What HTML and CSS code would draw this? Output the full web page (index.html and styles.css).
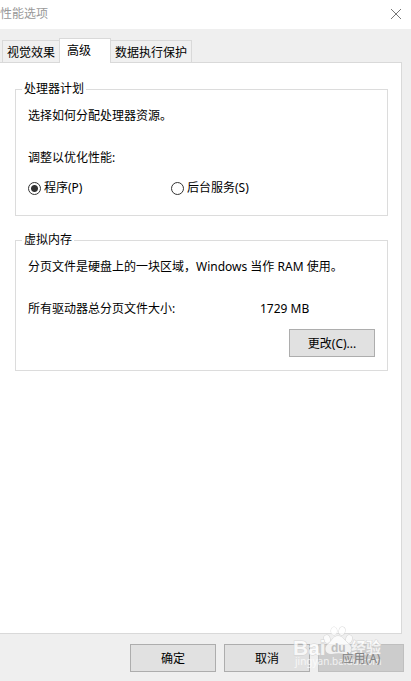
FILE: index.html
```
<!DOCTYPE html>
<html lang="zh-CN">
<head>
  <meta charset="UTF-8">
  <meta name="viewport" content="width=device-width, initial-scale=1.0">
  <title>性能选项</title>
  <link rel="stylesheet" href="styles.css">
</head>
<body>
  <header class="titlebar">
    <span>性能选项</span>
    <button class="close" type="button" aria-label="关闭">
      <svg width="12" height="12" viewBox="0 0 12 12"><path d="M1 1L11 11M11 1L1 11" stroke="#777" fill="none"/></svg>
    </button>
  </header>

  <nav class="tabs">
    <button class="tab" type="button">视觉效果</button>
    <button class="tab active" type="button">高级</button>
    <button class="tab" type="button">数据执行保护</button>
  </nav>

  <main class="panel">
    <fieldset class="group">
      <legend>处理器计划</legend>
      <p>选择如何分配处理器资源。</p>
      <p class="spaced">调整以优化性能:</p>
      <div class="radios">
        <label><input type="radio" name="plan" checked>程序(P)</label>
        <label><input type="radio" name="plan">后台服务(S)</label>
      </div>
    </fieldset>

    <fieldset class="group memory">
      <legend>虚拟内存</legend>
      <p>分页文件是硬盘上的一块区域，Windows 当作 RAM 使用。</p>
      <p class="spaced total"><span>所有驱动器总分页文件大小:</span><span>1729 MB</span></p>
      <div class="change">
        <button class="btn" type="button">更改(C)...</button>
      </div>
    </fieldset>
  </main>

  <footer class="footer">
    <button class="btn" type="button">确定</button>
    <button class="btn" type="button">取消</button>
    <button class="btn" type="button" disabled><span class="label">应用(A)</span></button>
    <div class="watermark">
      <svg width="92" height="44" viewBox="0 0 92 44">
        <g class="mark">
          <ellipse cx="34" cy="14" rx="3" ry="4" transform="rotate(-15 34 14)"/>
          <ellipse cx="41" cy="6" rx="3" ry="4"/>
          <ellipse cx="49" cy="6" rx="3" ry="4" transform="rotate(10 49 6)"/>
          <ellipse cx="56" cy="14" rx="3" ry="4" transform="rotate(15 56 14)"/>
          <path d="M45 11C40 11 39 16 35 19C30 23 33 30 39 29C43 28 48 28 52 29C58 30 61 24 56 19C52 16 50 11 45 11Z"/>
          <text class="brand" x="0" y="30">Bai</text>
          <text class="site" x="58" y="28">经验</text>
        </g>
        <text class="url" x="2" y="40">jingyan.baidu.com</text>
        <text class="du" x="38" y="27">du</text>
      </svg>
    </div>
  </footer>
</body>
</html>
```
FILE: styles.css
```
* {
  box-sizing: border-box;
}
body {
  margin: 0;
  min-height: 100vh;
  display: flex;
  flex-direction: column;
  background: #efefef;
  color: #000;
  font: 12px/16px "Noto Sans", "Noto Sans CJK SC", sans-serif;
}
button {
  font: inherit;
  color: inherit;
  padding: 0;
}
p {
  margin: 0;
}
.titlebar {
  display: flex;
  justify-content: space-between;
  align-items: center;
  height: 29px;
  padding: 0 9px 2px 0;
  background: #fff;
  color: #999;
}
.close {
  display: flex;
  border: 0;
  background: none;
}
.tabs {
  display: flex;
  align-items: flex-end;
  height: 34px;
  padding-left: 2px;
  margin-bottom: -1px;
  z-index: 1;
}
.tab {
  height: 22px;
  padding: 2px 4px 0;
  margin-bottom: 1px;
  border: 1px solid #d9d9d9;
  border-bottom: 0;
  background: #f0f0f0;
}
.tab.active {
  height: 25px;
  margin: 0 -1px;
  padding: 0 19px 1px 7px;
  background: #fff;
}
.panel {
  flex: 1;
  padding: 18px 13px 0 15px;
  margin-right: 9px;
  border: 1px solid #d9d9d9;
  border-left: 0;
  background: #fff;
}
.group {
  min-width: 0;
  height: 135px;
  margin: 0 0 16px;
  padding: 11px 12px 0;
  border: 1px solid #dcdcdc;
}
.group legend {
  padding: 0 2px;
  margin-left: -6px;
}
.memory {
  height: 139px;
}
.spaced {
  margin-top: 26px;
}
.radios {
  display: grid;
  grid-template-columns: 143px auto;
  margin-top: 14px;
}
.radios label {
  display: flex;
  align-items: center;
  gap: 3px;
}
.radios input {
  appearance: none;
  width: 13px;
  height: 13px;
  margin: 0;
  border: 1px solid #333;
  border-radius: 50%;
  background: #fff;
}
.radios input:checked {
  background: radial-gradient(circle, #333 3px, #fff 4px);
}
.total {
  display: grid;
  grid-template-columns: 232px auto;
}
.change {
  display: flex;
  justify-content: flex-end;
  margin-top: 12px;
}
.btn {
  width: 86px;
  height: 28px;
  padding-top: 1px;
  border: 1px solid #adadad;
  background: #e1e1e1;
}
.btn:disabled {
  border-color: #bfbfbf;
  background: #ccc;
  color: #838383;
}
.label {
  position: relative;
  z-index: 2;
}
.footer {
  position: relative;
  display: flex;
  justify-content: flex-end;
  gap: 8px;
  padding: 10px 7px 9px;
}
.watermark {
  position: absolute;
  z-index: 1;
  right: 26px;
  bottom: 12px;
  height: 44px;
  opacity: 0.75;
  pointer-events: none;
}
.mark {
  fill: #fff;
  stroke: #ccc;
  stroke-width: 1px;
  paint-order: stroke;
}
.brand {
  font: bold 21px "Liberation Sans", sans-serif;
}
.site {
  font: bold 15px "Noto Sans CJK SC", sans-serif;
}
.url {
  font: 10px "Noto Sans", sans-serif;
  fill: #fff;
}
.du {
  font: bold 12px "Liberation Sans", sans-serif;
  fill: #bbb;
}
```
